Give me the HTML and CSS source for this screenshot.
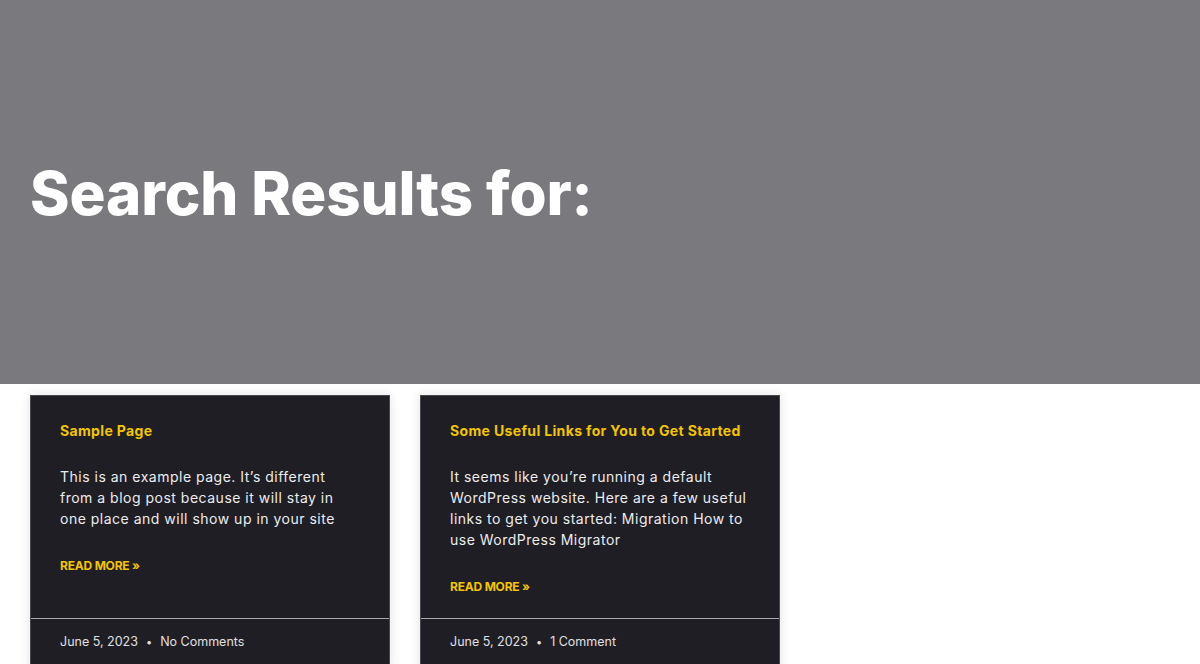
FILE: index.html
```html
<!DOCTYPE html>
<html lang="en">
<head>
<meta charset="utf-8">
<title>Search Results</title>
<link rel="stylesheet" href="styles.css">
</head>
<body>
<header class="page-header">
  <h1 class="page-title">Search Results for:</h1>
</header>
<main class="results">
  <article class="card">
    <div class="card-body">
      <h3 class="card-title">Sample Page</h3>
      <p class="card-excerpt">This is an example page. It’s different from a blog post because it will stay in one place and will show up in your site</p>
      <a class="read-more" href="#">Read More »</a>
    </div>
    <div class="card-meta">
      <span>June 5, 2023</span><span class="sep">•</span><span>No Comments</span>
    </div>
  </article>
  <article class="card">
    <div class="card-body">
      <h3 class="card-title">Some Useful Links for You to Get Started</h3>
      <p class="card-excerpt">It seems like you’re running a default WordPress website. Here are a few useful links to get you started: Migration How to use WordPress Migrator</p>
      <a class="read-more" href="#">Read More »</a>
    </div>
    <div class="card-meta">
      <span>June 5, 2023</span><span class="sep">•</span><span>1 Comment</span>
    </div>
  </article>
</main>
</body>
</html>
```
FILE: styles.css
```css
* { box-sizing: border-box; }
html, body { margin: 0; padding: 0; }
body {
  font-family: Inter, "Open Sans", "DejaVu Sans", sans-serif;
  background: #ffffff;
  overflow: hidden;
}
.page-header {
  height: 384px;
  background: #7a797e;
  display: flex;
  align-items: center;
  padding: 0 30px;
}
.page-title {
  margin: 0;
  color: #ffffff;
  font-size: 60px;
  font-weight: 800;
  letter-spacing: -0.1px;
  line-height: 1;
  position: relative;
  top: 1px;
}
.results {
  display: grid;
  grid-template-columns: repeat(3, 1fr);
  gap: 30px;
  padding: 11px 30px 0;
  align-items: stretch;
}
.card {
  background: #1f1e24;
  border: 1px solid #4a494e;
  box-shadow: 0 0 10px rgba(0, 0, 0, 0.12);
  display: flex;
  flex-direction: column;
}
.card-body {
  flex: 1;
  padding: 25px 29px 22px;
  display: flex;
  flex-direction: column;
}
.card-title {
  margin: 0 0 25px;
  color: #f2c500;
  font-size: 14px;
  font-weight: 700;
  line-height: 20px;
  letter-spacing: 0.35px;
}
.card-excerpt {
  margin: 0 0 28px;
  color: #ececee;
  font-size: 14px;
  line-height: 21px;
  letter-spacing: 0.5px;
}
.read-more {
  color: #f2c500;
  font-size: 12px;
  font-weight: 700;
  line-height: 18px;
  text-transform: uppercase;
  text-decoration: none;
  letter-spacing: -0.2px;
}
.card-meta {
  border-top: 1px solid #a6a5aa;
  padding: 14px 29px 20px;
  color: #e0e0e3;
  font-size: 12.5px;
  line-height: 18px;
  display: flex;
  align-items: center;
}
.card-meta .sep {
  margin: 0 8px;
  font-size: 11px;
}
```
